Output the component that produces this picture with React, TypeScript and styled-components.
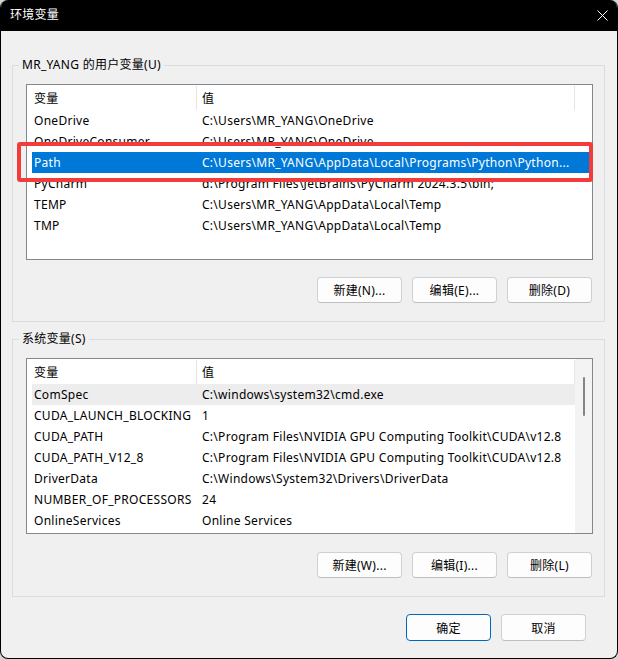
import React from "react";
import styled, { createGlobalStyle } from "styled-components";

const Global = createGlobalStyle`
  html, body { margin: 0; padding: 0; background: #cfd8d2; }
  body { font-family: "Noto Sans", "Noto Sans CJK SC", sans-serif; font-size: 12px; letter-spacing: 0.28px; color: #000; }
  * { box-sizing: border-box; }
`;

const Window = styled.div`
  width: 618px;
  height: 659px;
  background: #f0f0f0;
  border: 1px solid #000;
  border-top: none;
  border-radius: 8px;
  overflow: hidden;
  display: flex;
  flex-direction: column;
`;

const TitleBar = styled.div`
  height: 31px;
  flex: none;
  background: #000;
  color: #fff;
  display: flex;
  align-items: center;
  justify-content: space-between;
  padding: 0 9px 0 9px;
  font-size: 12px;
  line-height: 16px;
`;

const Title = styled.span`
  margin-top: -1px;
`;

const Close = styled.svg`
  width: 11px;
  height: 11px;
  margin-top: -1px;
`;

const Content = styled.div`
  flex: 1;
  display: flex;
  flex-direction: column;
  padding: 26px 12px 0 11px;
`;

const Group = styled.fieldset<{ $gap?: number }>`
  margin: ${(p) => p.$gap ?? 0}px 0 0 0;
  border: 1px solid #dcdcdc;
  padding: 11px 11px 18px 13px;
  min-width: 0;
  display: flex;
  flex-direction: column;
`;

const Legend = styled.legend`
  font-size: 12px;
  line-height: 16px;
  padding: 0 3px;
  margin-left: -7px;
  color: #000;
`;

const ListBox = styled.div`
  position: relative;
  height: 176px;
  border: 1px solid #828790;
  background: #fff;
  display: flex;
`;

const ListBody = styled.div`
  flex: 1;
  overflow: hidden;
  padding-left: 5px;
`;

const Columns = styled.div`
  display: grid;
  grid-template-columns: 165px 378px;
`;

const HeaderRow = styled(Columns)`
  height: 25px;
`;

const HeaderCell = styled.div<{ $second?: boolean }>`
  display: flex;
  align-items: center;
  padding-left: ${(p) => (p.$second ? 5 : 2)}px;
  border-right: 1px solid #e5e5e5;
  margin-top: 1px;
`;

const Row = styled(Columns)<{ $state?: "selected" | "hover" }>`
  height: 21px;
  background: ${(p) =>
    p.$state === "selected" ? "#0078d7" : p.$state === "hover" ? "#ededed" : "transparent"};
  color: ${(p) => (p.$state === "selected" ? "#fff" : "#000")};
`;

const Cell = styled.div<{ $second?: boolean }>`
  display: flex;
  align-items: center;
  padding-left: ${(p) => (p.$second ? 5 : 2)}px;
  white-space: nowrap;
  overflow: hidden;
`;

const ScrollTrack = styled.div`
  width: 17px;
  flex: none;
  background: #f3f3f3;
  display: flex;
  justify-content: center;
  padding-top: 18px;
`;

const Thumb = styled.div`
  width: 2px;
  height: 39px;
  margin-left: 1px;
  background: #858585;
  border-radius: 1px;
`;

const Highlight = styled.div`
  position: absolute;
  left: -10px;
  top: 57px;
  width: 576px;
  height: 40px;
  border: 4px solid #f23b3b;
  border-radius: 3px;
  pointer-events: none;
`;

const ButtonRow = styled.div<{ $top: number }>`
  display: flex;
  justify-content: flex-end;
  gap: 10px;
  margin-top: ${(p) => p.$top}px;
  padding-right: 1px;
`;

const Button = styled.button<{ $primary?: boolean; $h?: number }>`
  width: 85px;
  height: ${(p) => p.$h ?? 26}px;
  font-family: inherit;
  font-size: 12px;
  letter-spacing: inherit;
  color: #000;
  background: #fdfdfd;
  border: 1px solid ${(p) => (p.$primary ? "#0067c0" : "#d0d0d0")};
  border-bottom-color: ${(p) => (p.$primary ? "#0067c0" : "#bfbfbf")};
  border-radius: 4px;
  padding: 0;
  display: flex;
  align-items: center;
  justify-content: center;
`;

const Footer = styled.div`
  display: flex;
  justify-content: flex-end;
  gap: 10px;
  margin-top: 17px;
  padding-right: 19px;
`;

type Item = { name: string; value: string; state?: "selected" | "hover" };

const userVars: Item[] = [
  { name: "OneDrive", value: "C:\\Users\\MR_YANG\\OneDrive" },
  { name: "OneDriveConsumer", value: "C:\\Users\\MR_YANG\\OneDrive" },
  {
    name: "Path",
    value: "C:\\Users\\MR_YANG\\AppData\\Local\\Programs\\Python\\Python...",
    state: "selected",
  },
  { name: "PyCharm", value: "d:\\Program Files\\JetBrains\\PyCharm 2024.3.5\\bin;" },
  { name: "TEMP", value: "C:\\Users\\MR_YANG\\AppData\\Local\\Temp" },
  { name: "TMP", value: "C:\\Users\\MR_YANG\\AppData\\Local\\Temp" },
];

const sysVars: Item[] = [
  { name: "ComSpec", value: "C:\\windows\\system32\\cmd.exe", state: "hover" },
  { name: "CUDA_LAUNCH_BLOCKING", value: "1" },
  { name: "CUDA_PATH", value: "C:\\Program Files\\NVIDIA GPU Computing Toolkit\\CUDA\\v12.8" },
  { name: "CUDA_PATH_V12_8", value: "C:\\Program Files\\NVIDIA GPU Computing Toolkit\\CUDA\\v12.8" },
  { name: "DriverData", value: "C:\\Windows\\System32\\Drivers\\DriverData" },
  { name: "NUMBER_OF_PROCESSORS", value: "24" },
  { name: "OnlineServices", value: "Online Services" },
];

function VarList({ items, scroll, mark }: { items: Item[]; scroll?: boolean; mark?: boolean }) {
  return (
    <ListBox>
      <ListBody>
        <HeaderRow>
          <HeaderCell>变量</HeaderCell>
          <HeaderCell $second>值</HeaderCell>
        </HeaderRow>
        {items.map((it) => (
          <Row key={it.name} $state={it.state}>
            <Cell>{it.name}</Cell>
            <Cell $second>{it.value}</Cell>
          </Row>
        ))}
      </ListBody>
      {scroll && (
        <ScrollTrack>
          <Thumb />
        </ScrollTrack>
      )}
      {mark && <Highlight />}
    </ListBox>
  );
}

export default function App() {
  return (
    <>
      <Global />
      <Window>
        <TitleBar>
          <Title>环境变量</Title>
          <Close viewBox="0 0 11 11">
            <path d="M0.5 0.5 L10.5 10.5 M10.5 0.5 L0.5 10.5" stroke="#fff" strokeWidth="1" fill="none" />
          </Close>
        </TitleBar>
        <Content>
          <Group>
            <Legend>MR_YANG 的用户变量(U)</Legend>
            <VarList items={userVars} mark />
            <ButtonRow $top={17}>
              <Button>新建(N)...</Button>
              <Button>编辑(E)...</Button>
              <Button>删除(D)</Button>
            </ButtonRow>
          </Group>
          <Group $gap={9}>
            <Legend>系统变量(S)</Legend>
            <VarList items={sysVars} scroll />
            <ButtonRow $top={18}>
              <Button>新建(W)...</Button>
              <Button>编辑(I)...</Button>
              <Button>删除(L)</Button>
            </ButtonRow>
          </Group>
          <Footer>
            <Button $primary $h={27}>确定</Button>
            <Button $h={27}>取消</Button>
          </Footer>
        </Content>
      </Window>
    </>
  );
}
